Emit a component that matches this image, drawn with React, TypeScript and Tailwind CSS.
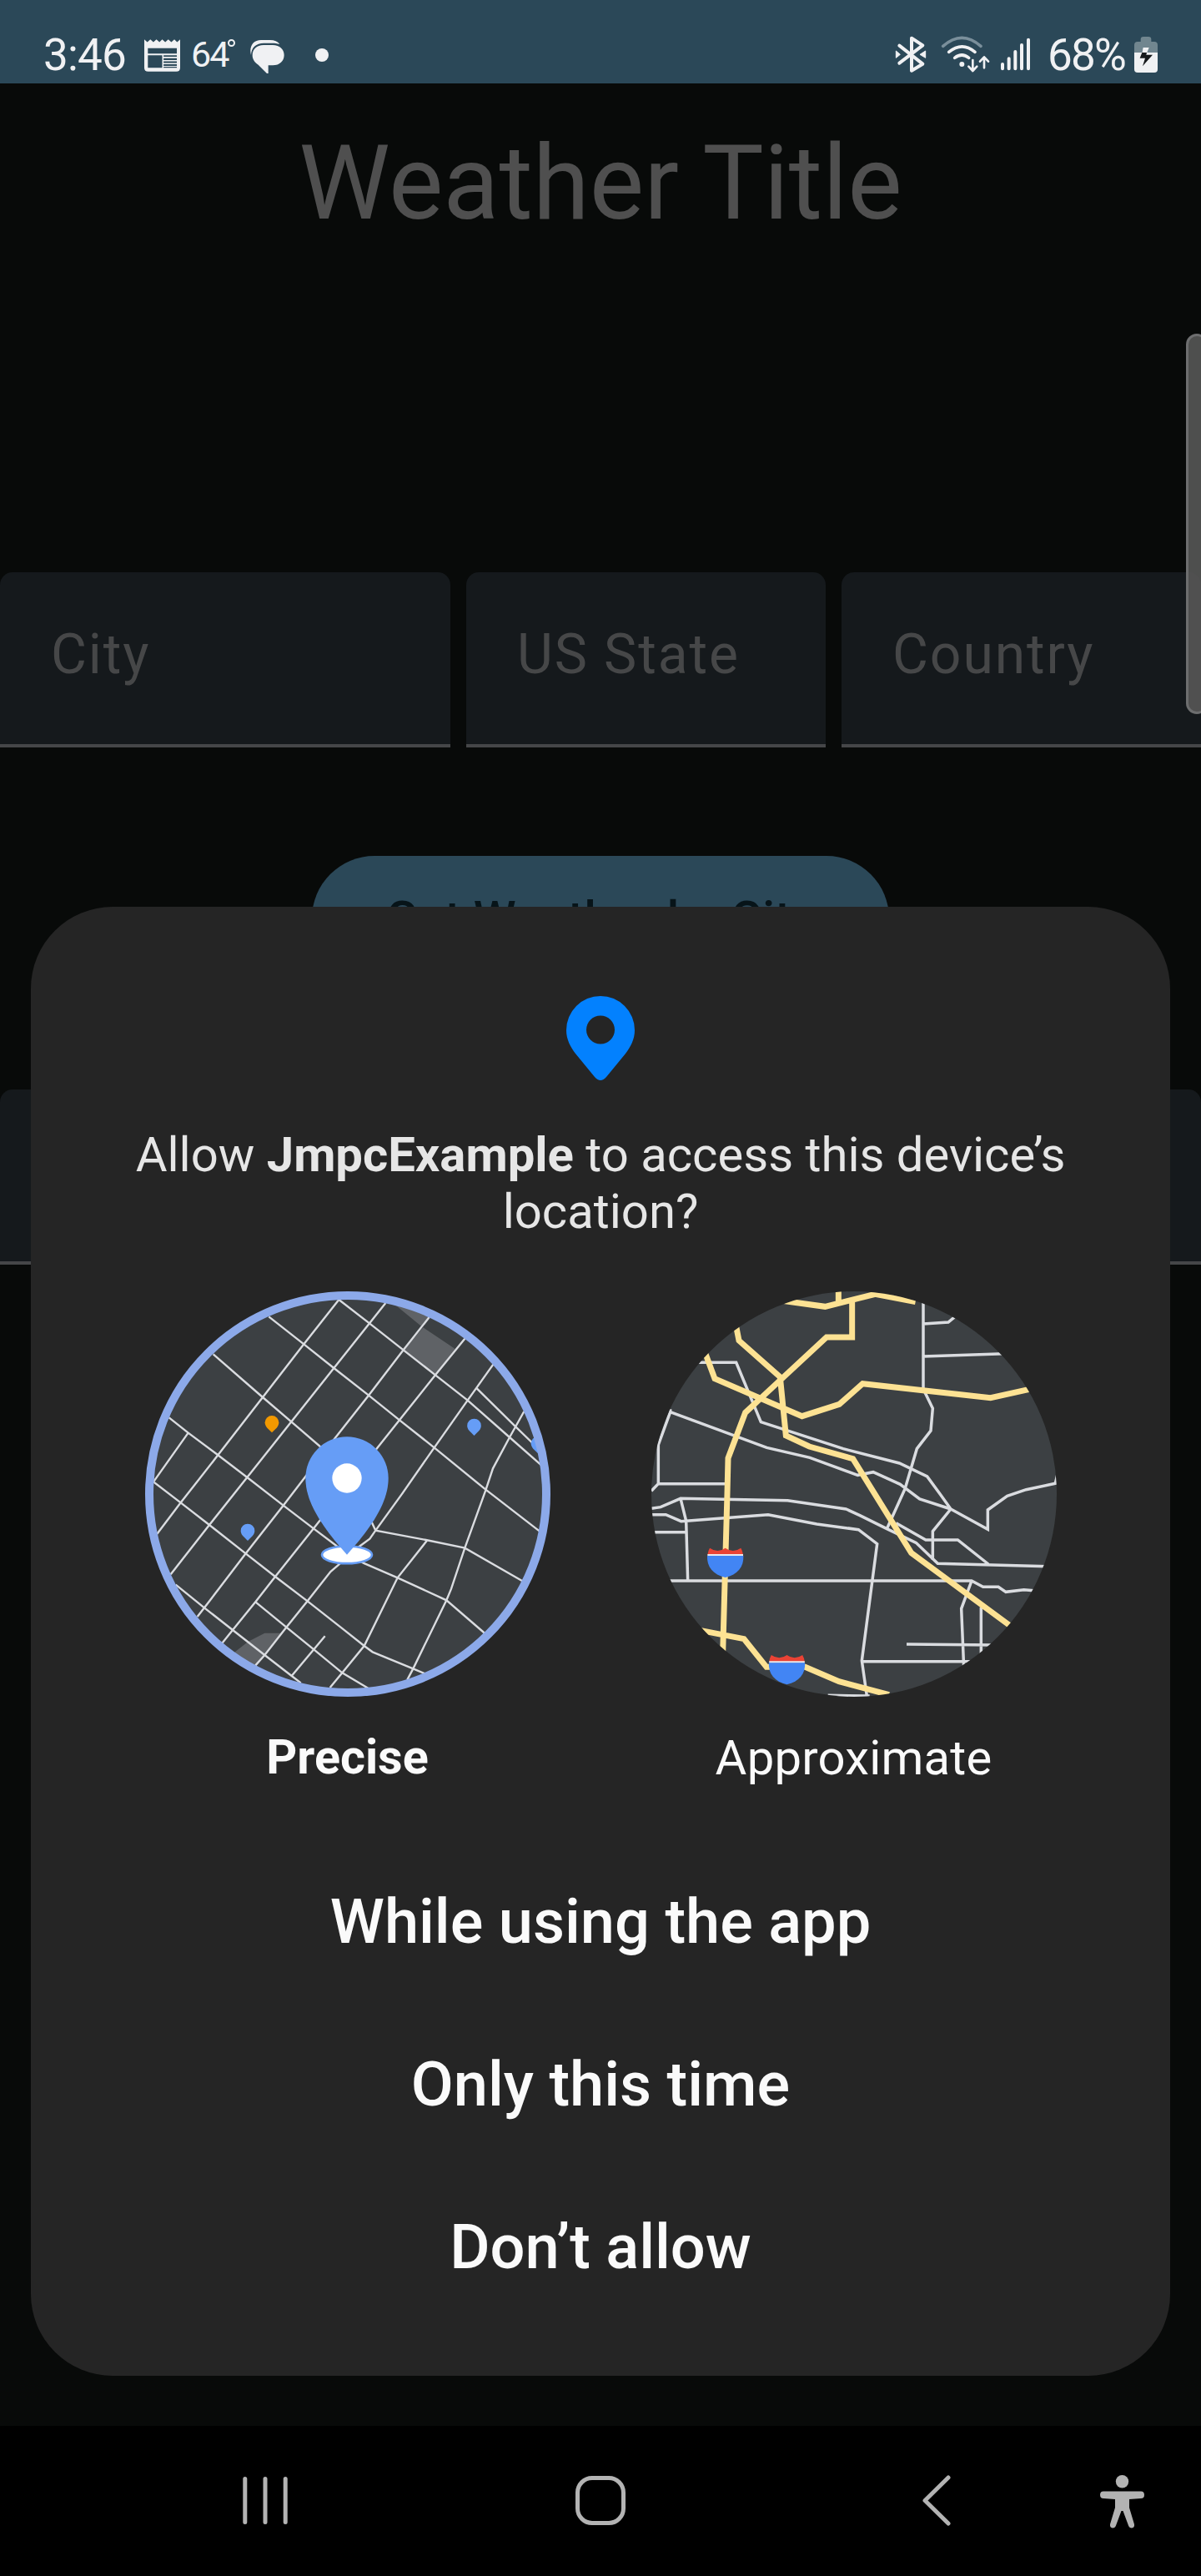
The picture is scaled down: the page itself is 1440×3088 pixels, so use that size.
import React from "react";

const FIELD = "flex h-[210px] items-center rounded-t-[15px] border-b-4 border-[#454648] bg-[#15191c] pl-[61px] text-[66px] tracking-[1.9px] text-[#464748]";

function Field({ label, className }: { label: string; className: string }) {
  return (
    <div className={`${FIELD} ${className}`}>
      <span className="relative -top-1 leading-none">{label}</span>
    </div>
  );
}

function StatusBar() {
  return (
    <header className="flex h-[100px] items-start bg-[#2b4858] text-[#f0f1f3]">
      <span className="ml-[52px] mt-[40px] w-[100px] whitespace-nowrap text-[53px] leading-[52px] tracking-[-0.8px]">3:46</span>
      <svg className="ml-[21px] mt-[47px] h-[39px] w-[43px] shrink-0" viewBox="518 141 130 117">
        <path fill="#f0f1f3" fillRule="evenodd" d="M518 141l11 10 11-10 11 10 11-10 11 10 10-10 11 10 11-10 11 10 11-10 10 10 11-10v103q0 14-14 14H532q-14 0-14-14zM531 173v20h105v-20zM531 199v45h52v-45zM588 199v5h48v-5zM588 209v7h48v-7zM588 221v6h48v-6zM588 231v6h48v-6zM588 240v4h48v-4z" />
      </svg>
      <span className="relative ml-[13px] mt-[43px] w-[54px] whitespace-nowrap text-[43px] leading-[44px] tracking-[-2px]">
        64
        <i className="absolute left-[44px] top-[4px] h-[9px] w-[9px] rounded-full border-2 border-[#f0f1f3]" />
      </span>
      <svg className="ml-[16px] mt-[47px] h-[42px] w-[42px] shrink-0" viewBox="898 141 126 126">
        <path fill="#f0f1f3" d="M949 162h33c25 0 41 15 41 36s-16 37-41 37h-16v29h-5l-31-31c-14-9-21-20-21-34 0-22 15-37 40-37zM904 198c-8-30 7-54 36-54h32c16 0 28 5 35 15-10-3-18-4-27-4h-30c-28 0-45 16-46 43z" />
      </svg>
      <i className="ml-[37px] mt-[58px] h-4 w-4 rounded-full bg-[#f0f1f3]" />

      <svg className="ml-auto mt-[43px] h-[45px] w-[38px] shrink-0" viewBox="102 130 114 135">
        <path d="M118 165l84 66-40 24V138l40 26-84 64" fill="none" stroke="#f0f1f3" strokeWidth="12" strokeLinejoin="round" strokeLinecap="round" />
        <path d="M106 184l15 13-15 12zM212 184l-20 13 20 12z" fill="#f0f1f3" stroke="#f0f1f3" strokeWidth="3" strokeLinejoin="round" />
      </svg>
      <svg className="ml-[17px] mt-[42px] h-[46px] w-[60px] shrink-0" viewBox="267 126 180 138">
        <g fill="none" strokeWidth="11" strokeLinecap="round" stroke="#f0f1f3">
          <path d="M275 166q68-60 136 0" stroke="#7a8f9b" />
          <path d="M296 187q48-39 94 0M317 208q26-20 51 0" />
          <path strokeWidth="8" strokeLinejoin="round" d="M382 216v38m-15-15 15 16 15-16M423 244v-38m-15 15 15-16 15 16" />
        </g>
        <circle cx="343" cy="231" r="9" fill="#f0f1f3" />
      </svg>
      <svg className="ml-[11px] mt-[44px] h-[42px] w-[38px] shrink-0" viewBox="480 132 114 126">
        <path d="M489 231v16M512 211v36M535 186v61M558 162v85M582 143v104" stroke="#f0f1f3" strokeWidth="12" strokeLinecap="round" />
      </svg>
      <span className="ml-[19px] mt-[40px] w-[96px] whitespace-nowrap text-[53px] leading-[52px] tracking-[-1.8px]">68%</span>
      <svg className="ml-[8px] mr-[52px] mt-[44px] h-[43px] w-[28px] shrink-0" viewBox="960 132 84 129">
        <path d="M983 142q0-10 10-10h18q10 0 10 10v8h11q12 0 12 12v27h-84v-27q0-12 12-12h11z" fill="#71868f" />
        <path d="M960 189h84v60q0 12-12 12h-60q-12 0-12-12z" fill="#f0f1f3" />
        <path d="M992 171h21l-8 20h-17z" fill="#f0f1f3" />
        <path d="M988 189h17l-2 8h23l-36 41 9-29h-19z" fill="#171a1c" />
      </svg>
    </header>
  );
}

const STREETS = [
  "M737 85L611 245 463 436 302 644 168 815 83 927",
  "M905 97L719 331 566 524 407 724 271 895 132 1073",
  "M1062 148L969 266 844 429 720 587 537 825 402 998 253 1193 228 1225",
  "M1190 225L1084 356 955 518 872 622 646 908 508 1081 437 1172 355 1273 317 1320",
  "M1292 318L1200 447 1080 617 965 782 869 915 848 945 810 973 740 1035 707 1063 624 1169 548 1263 470 1363 437 1400",
  "M1403 487L1351 580 1291 692 1265 770 1190 978 1141 1125 1124 1166 1004 1412 983 1452",
  "M1055 950L948 1085 828 1330 749 1427 705 1480",
  "M687 1295L567 1438",
  "M195 564L70 740",
  "M737 85L847 170 969 266 1084 356 1200 447 1351 580 1465 680",
  "M485 146L611 245 719 331 844 429 955 518 1080 617 1265 768 1458 917",
  "M285 281L463 436 566 524 668 612 855 885 869 915 1050 949 1190 978 1397 1097",
  "M126 509L195 564 302 644 407 724 537 825 646 908 728 970 825 1032 948 1085 1124 1166 1262 1285",
  "M70 740L168 815 271 895 402 998 508 1081 624 1169 750 1268 828 1330 858 1352 1004 1412 1047 1430",
  "M150 1110L253 1193 355 1273 470 1363 567 1438 600 1463",
  "M437 1172L548 1263 647 1343 749 1427 842 1482",
  "M1233 404L1373 542 1440 607",
];

function MiniPin({ x, y, fill }: { x: number; y: number; fill: string }) {
  return <path transform={`translate(${x} ${y})`} fill={fill} d="M0 36L-17 19C-23 12-25 6-25 0a25 25 0 0 1 50 0C25 6 23 12 17 19z" />;
}

function PreciseMap() {
  return (
    <svg className="h-[486px] w-[486px]" viewBox="40 55 1458 1458">
      <clipPath id="precise-disc"><circle cx="769" cy="784" r="720" /></clipPath>
      <g clipPath="url(#precise-disc)">
        <rect x="40" y="55" width="1458" height="1458" fill="#3c4043" />
        <path fill="#5f6266" d="M925 92L1070 140 1035 182zM1040 185L1155 262 1084 356 969 266zM350 1362L410 1315 470 1284H530L430 1415z" />
        <path d={STREETS.join("")} fill="none" stroke="#dadce0" strokeWidth="7.200" />
        <MiniPin x={496} y={527} fill="#f29900" />
        <MiniPin x={1223.5} y={538} fill="#669df6" />
        <MiniPin x={409} y={916} fill="#669df6" />
        <MiniPin x={1453} y={602} fill="#669df6" />
      </g>
      <circle cx="769" cy="784" r="714" fill="none" stroke="#8ca9e9" strokeWidth="30" />
      <ellipse cx="766" cy="1002.500" rx="90" ry="31" fill="#fff" stroke="#669df6" strokeWidth="8" />
      <path fill="#669df6" d="M766 1002L722 951C665 880 617 805 617 727a149 149 0 0 1 298 0C915 805 867 880 810 951z" />
      <circle cx="766" cy="727" r="53" fill="#fff" />
    </svg>
  );
}

const ROADS = [
  "M195 310H335L424 524 720 620 922 672 1022 720 1070 785 1107 837 1240 910V840L1310 790 1378 767 1483 745 1490 715",
  "M1107 837L1042 917V1020",
  "M98 488L445 616 600 652 772 715 828 704 925 748 995 801 1107 837",
  "M98 478V488L55 606V746L30 772M55 746H303",
  "M1008 90V405L1042 475 1035 555 985 620 942 765 877 908",
  "M1008 171L1098 165 1125 143M1008 288L1300 278",
  "M30 835L63 830 135 799 520 806 730 837 780 860 877 908 982 958 1060 1033 1455 1043",
  "M910 887L1017 948H1132L1242 1035",
  "M30 857H82L137 881 155 880 450 857 625 891 775 911 842 962 787 1382 805 1508",
  "M135 799L155 880 161 1095M42 920H155",
  "M95 1095H1182L1223 1117H1278L1305 1135 1370 1127 1415 1131",
  "M1182 1095L1145 1195 1154 1408M1216 1190V1365M948 1323L1265 1326M787 1385H1195M665 1507L815 1509",
];

const HIGHWAYS = [
  "M490 86L655 109 835 64 980 92M703 50V95",
  "M752 85V219H660L424 438 368 490 306 654 303 780 287 1355",
  "M334 175L345 231 493 362 514 573 598 612 755 656 965 995 1325 1260",
  "M224 277L258 368 572 503 706 460 790 386 1250 437 1400 404",
  "M205 1273L363 1304 444 1405H583L705 1457 885 1505",
];

function Shield({ x, y }: { x: number; y: number }) {
  return (
    <g transform={`translate(${x} ${y})`}>
      <path fill="#ea4335" d="M-56 0Q-27 20 0 0 27 20 56 0 62 10 64 24H-64Q-62 10-56 0z" />
      <path fill="#e8eaed" d="M-64 22H64V29H-64z" />
      <path fill="#4285f4" d="M-65 28H65C67 68 44 96 0 106-44 96-67 68-65 28z" />
    </g>
  );
}

function ApproximateMap() {
  return (
    <svg className="h-[486px] w-[486px]" viewBox="30 54 1458 1458">
      <clipPath id="approximate-disc"><circle cx="759" cy="783" r="729" /></clipPath>
      <g clipPath="url(#approximate-disc)">
        <rect x="30" y="54" width="1458" height="1458" fill="#3c4043" />
        <path d={ROADS.join("")} fill="none" stroke="#dadce0" strokeWidth="10.500" />
        <path d={HIGHWAYS.join("")} fill="none" stroke="#fde293" strokeWidth="21" />
        <Shield x={296} y={977} />
        <Shield x={517.5} y={1362} />
      </g>
    </svg>
  );
}

function PermissionDialog() {
  return (
    <section className="absolute left-[37px] top-[1087px] flex h-[1761px] w-[1366px] flex-col items-center rounded-[98px] bg-[#252525]">
      <svg className="mt-[107px] h-[101px] w-[82px] shrink-0" viewBox="0 0 82 101">
        <path fill="#0381fe" fillRule="evenodd" d="M41 0a41 41 0 0 1 41 41c0 11-5 20-11 28L48 97q-7 8-14 0L11 69C5 61 0 52 0 41A41 41 0 0 1 41 0zM41 23.500a17 17 0 1 0 0 34 17 17 0 0 0 0-34z" />
      </svg>
      <h2 className="mt-[55px] text-center text-[58px] font-normal leading-[68px] text-[#e6e6e6]">
        Allow <b className="font-bold">JmpcExample</b> to access this device’s
        <br />
        location?
      </h2>
      <div className="mt-[62px] flex w-[1093px] justify-between text-[58px] leading-[68px] text-[#fafafa]">
        <div className="flex flex-col items-center gap-[39px]">
          <PreciseMap />
          <b className="text-[57.5px] font-bold">Precise</b>
        </div>
        <div className="flex flex-col items-center gap-[39px]">
          <ApproximateMap />
          <span className="tracking-[0.2px]">Approximate</span>
        </div>
      </div>
      <div className="mt-[65px] flex flex-col items-center text-[74px] font-medium leading-[195px] text-[#fafafa]">
        <button>While using the app</button>
        <button>Only this time</button>
        <button>Don’t allow</button>
      </div>
    </section>
  );
}

function NavBar() {
  return (
    <nav className="flex h-[180px] items-start bg-black">
      <svg className="ml-[291px] mt-[61px] h-[57px] w-[54px]" viewBox="0 0 54 57">
        <path d="M2.800 2.500v52M27 2.500v52M51.200 2.500v52" stroke="#b3b3b3" strokeWidth="5" strokeLinecap="round" />
      </svg>
      <i className="ml-[344.5px] mt-[60px] h-[59px] w-[60px] rounded-[20px] border-[5.5px] border-[#b3b3b3]" />
      <svg className="ml-[355.5px] mt-[59px] h-[61px] w-[35px]" viewBox="0 0 35 61">
        <path d="M32 3L4 30.500 32 58" fill="none" stroke="#b3b3b3" strokeWidth="5" strokeLinecap="round" strokeLinejoin="round" />
      </svg>
      <svg className="ml-[179px] mt-[59px] h-[64px] w-[53px]" viewBox="0 0 53 64">
        <circle cx="26.500" cy="7.800" r="7.700" fill="#b3b3b3" />
        <path fill="#b3b3b3" d="M4 19.500H49q4 0 4 4.300t-4 4.300L35 29v10l6 20q.500 4-3 4.500-3 0-4-3L27.500 43h-2L19 60.500q-1 3-4 3-3.500-.500-3-4.500l6-20V29L4 28q-4 0-4-4.200t4-4.300z" />
      </svg>
    </nav>
  );
}

export default function App() {
  return (
    <div className="relative flex h-[3088px] w-[1440px] flex-col overflow-hidden bg-[#080a09] font-['Roboto',sans-serif]">
      <StatusBar />
      <main className="flex flex-1 flex-col items-center">
        <h1 className="mt-[45px] text-[123.4px] font-normal leading-[150px] text-[#4f4f4f]">Weather Title</h1>
        <div className="mt-[391px] flex w-full justify-between">
          <Field label="City" className="w-[540px]" />
          <Field label="US State" className="w-[431px]" />
          <Field label="Country" className="w-[431px]" />
        </div>
        <button className="mt-[130px] h-[150px] w-[692px] rounded-full bg-[#2b4858] text-[57.75px] font-medium tracking-[0.4px] text-[#071419]">
          Get Weather by City
        </button>
        <div className="mt-[130px] h-[210px] w-full rounded-t-[15px] border-b-4 border-[#454648] bg-[#15191c]" />
      </main>
      <NavBar />
      <aside className="absolute -right-2 top-[400px] h-[456px] w-[26px] rounded-[16px] border-[3px] border-[#6d6e6f] bg-[#565757]/90" />
      <PermissionDialog />
    </div>
  );
}
